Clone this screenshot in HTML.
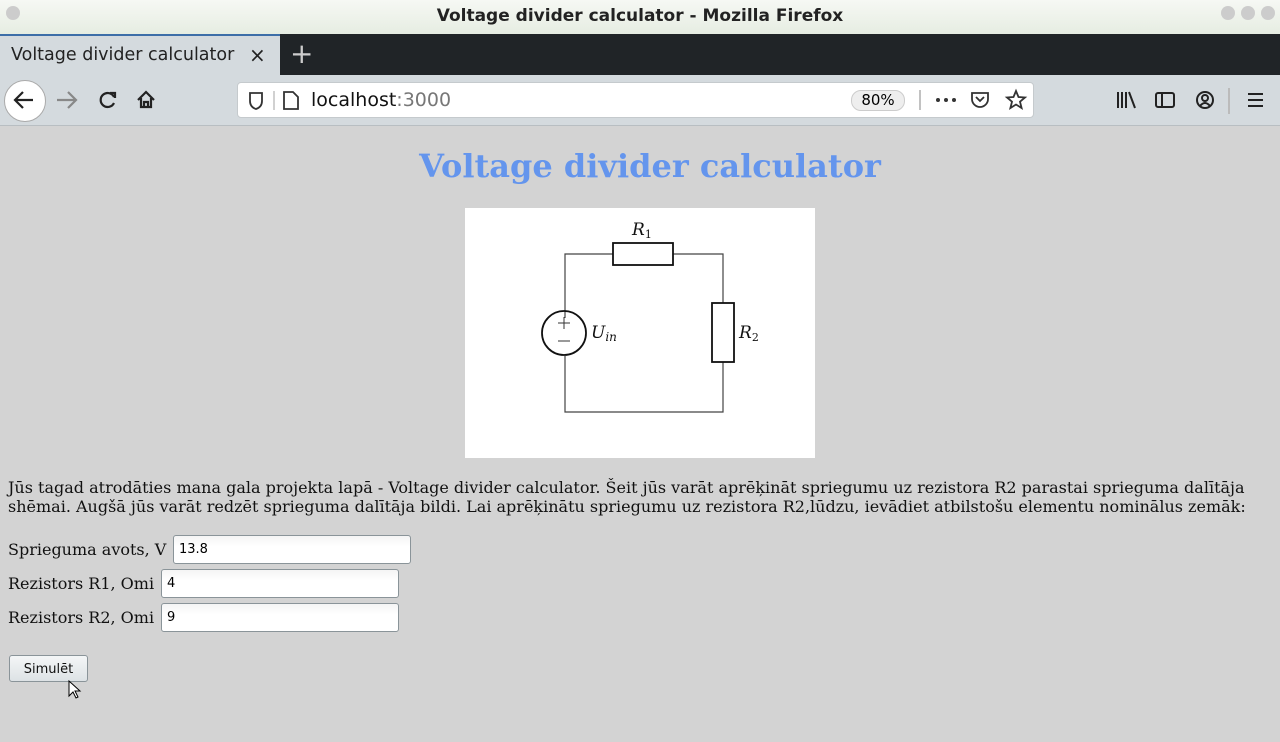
<!DOCTYPE html>
<html><head><meta charset="utf-8"><style>
*{margin:0;padding:0;box-sizing:border-box}
body{width:1280px;height:742px;overflow:hidden;background:#d3d3d3;font-family:"DejaVu Sans","Liberation Sans",sans-serif;position:relative}
.abs{position:absolute}
.title{top:0;left:0;width:1280px;height:34px;background:linear-gradient(#f6f8f4,#e6ede2);text-align:center;font-size:17px;font-weight:bold;line-height:33px;color:#222}
.tabs{top:34px;left:0;width:1280px;height:41px;background:#202427}
.tab{top:34px;left:0;width:280px;height:41px;background:#d4dade;border-top:2px solid #3d6ea8;font-size:17.5px;line-height:39px;padding-left:11px;color:#222}
.nav{top:75px;left:0;width:1280px;height:51px;background:#d4dade;border-bottom:1px solid #b8bec2}
.url{top:82px;left:237px;width:797px;height:36px;background:#fff;border:1px solid #c5cacd;border-radius:4px}
.serif{font-family:"DejaVu Serif","Liberation Serif",serif}
input{position:absolute;height:29px;border:1px solid #8a9499;border-radius:3px;background:linear-gradient(#f4f4f4,#fff 40%);font-family:"DejaVu Sans",sans-serif;font-size:13px;padding-left:5px;color:#000}
</style></head><body>
<div class="abs title">Voltage divider calculator - Mozilla Firefox</div>
<div class="abs" style="left:6px;top:6px;width:14px;height:14px;border-radius:50%;background:#ccc"></div>
<div class="abs" style="left:1221px;top:6px;width:14px;height:14px;border-radius:50%;background:#ccc"></div>
<div class="abs" style="left:1241px;top:6px;width:14px;height:14px;border-radius:50%;background:#ccc"></div>
<div class="abs" style="left:1261px;top:6px;width:14px;height:14px;border-radius:50%;background:#ccc"></div>
<div class="abs tabs"></div>
<div class="abs tab">Voltage divider calculator<span style="position:absolute;left:249px;font-size:20px">×</span></div>
<div class="abs" style="left:290px;top:36px;color:#ccc;font-size:28px;line-height:36px">+</div>
<div class="abs nav"></div>
<div class="abs" style="left:4px;top:80px;width:42px;height:42px;border-radius:50%;background:#fff;border:1px solid #aaa"></div>
<svg class="abs" style="left:0;top:75px" width="240" height="51"><g fill="none" stroke-width="2.2"><path d="M33 25H15M23 17l-8 8 8 8" stroke="#222"/><path d="M57 25H76M68 17l8 8-8 8" stroke="#888"/><path d="M114 22a7 7 0 1 0 0 6" stroke="#222"/><path d="M110 18h5v5" stroke="#222"/><path d="M138 25l8-8 8 8M141 23v9h10v-9M144 32v-5h4v5" stroke="#222"/></g></svg>
<div class="abs url"></div>
<svg class="abs" style="left:240px;top:82px" width="800" height="36"><g fill="none" stroke="#333" stroke-width="1.8"><path d="M10 11h12v8q0 6-6 8q-6-2-6-8z"/><path d="M34 9v19" stroke="#ccc"/><path d="M44 10h9l5 5v12H44z"/><path d="M680 8v20" stroke="#bbb"/><path d="M732 11h16v6a8 8 0 0 1-16 0z M736 15l4 4 4-4"/><path d="M776 9l2.5 6 6.5.5-5 4.2 1.6 6.3-5.6-3.5-5.6 3.5 1.6-6.3-5-4.2 6.5-.5z"/></g><g fill="#333"><circle cx="698" cy="18" r="2"/><circle cx="706" cy="18" r="2"/><circle cx="714" cy="18" r="2"/></g></svg>
<div class="abs" style="left:311px;top:89px;font-size:19px;color:#111">localhost<span style="color:#777">:3000</span></div>
<div class="abs" style="left:851px;top:90px;width:54px;height:21px;border:1px solid #ccc;border-radius:10px;background:#eee;font-size:15px;text-align:center;line-height:19px">80%</div>
<svg class="abs" style="left:1100px;top:82px" width="180" height="36"><g fill="none" stroke="#222" stroke-width="2"><path d="M18 10v16M22 10v16M26 10v16M29 10l6 16"/><rect x="56" y="11" width="18" height="14" rx="2"/><path d="M62 11v14"/><circle cx="105" cy="18" r="8"/><circle cx="105" cy="16" r="3"/><path d="M100 24q5-6 10 0"/><path d="M129 6v26" stroke="#bbb"/><path d="M148 12h15M148 18h15M148 24h15"/></g></svg>
<div class="abs serif" style="left:0;top:147px;width:1300px;text-align:center;color:#6495ed;font-weight:bold;font-size:32px">Voltage divider calculator</div>
<svg class="abs" style="left:465px;top:208px" width="350" height="250"><rect width="350" height="250" fill="#fff"/><g fill="none" stroke="#444" stroke-width="1.2"><path d="M100 110V46h48M208 46h50v49M258 154v50H100V148"/></g><g fill="none" stroke="#111" stroke-width="1.8"><rect x="148" y="35" width="60" height="22"/><rect x="247" y="95" width="22" height="59"/><circle cx="99" cy="125" r="22"/></g><g stroke="#333" stroke-width="1"><path d="M93 115h12M99 109v12M93 133h12"/></g><g font-family="DejaVu Serif,serif" font-style="italic" font-size="17" fill="#111"><text x="167" y="27">R<tspan font-size="11" font-style="normal" dy="3">1</tspan></text><text x="274" y="130">R<tspan font-size="11" font-style="normal" dy="3">2</tspan></text><text x="126" y="130">U<tspan font-size="12" dy="3">in</tspan></text></g></svg>
<div class="abs serif" style="left:8px;top:478px;font-size:16px;line-height:19px;color:#111;white-space:nowrap">Jūs tagad atrodāties mana gala projekta lapā - Voltage divider calculator. Šeit jūs varāt aprēķināt spriegumu uz rezistora R2 parastai sprieguma dalītāja<br>shēmai. Augšā jūs varāt redzēt sprieguma dalītāja bildi. Lai aprēķinātu spriegumu uz rezistora R2,lūdzu, ievādiet atbilstošu elementu nominālus zemāk:</div>
<div class="abs serif" style="left:8px;top:540px;font-size:16px;color:#111">Sprieguma avots, V</div>
<div class="abs serif" style="left:8px;top:574px;font-size:16px;color:#111">Rezistors R1, Omi</div>
<div class="abs serif" style="left:8px;top:608px;font-size:16px;color:#111">Rezistors R2, Omi</div>
<input style="left:173px;top:535px;width:238px" value="13.8">
<input style="left:161px;top:569px;width:238px" value="4">
<input style="left:161px;top:603px;width:238px" value="9">
<div class="abs" style="left:9px;top:655px;width:79px;height:27px;border:1px solid #8a9499;border-radius:3px;background:linear-gradient(#f4f6f7,#dde2e5);font-size:13px;text-align:center;line-height:27px;color:#111">Simulēt</div>
<svg class="abs" style="left:68px;top:680px" width="16" height="20"><path d="M1 1v15l4-4 3 6 2-1-3-6h5z" fill="#fff" stroke="#000"/></svg>
</body></html>
